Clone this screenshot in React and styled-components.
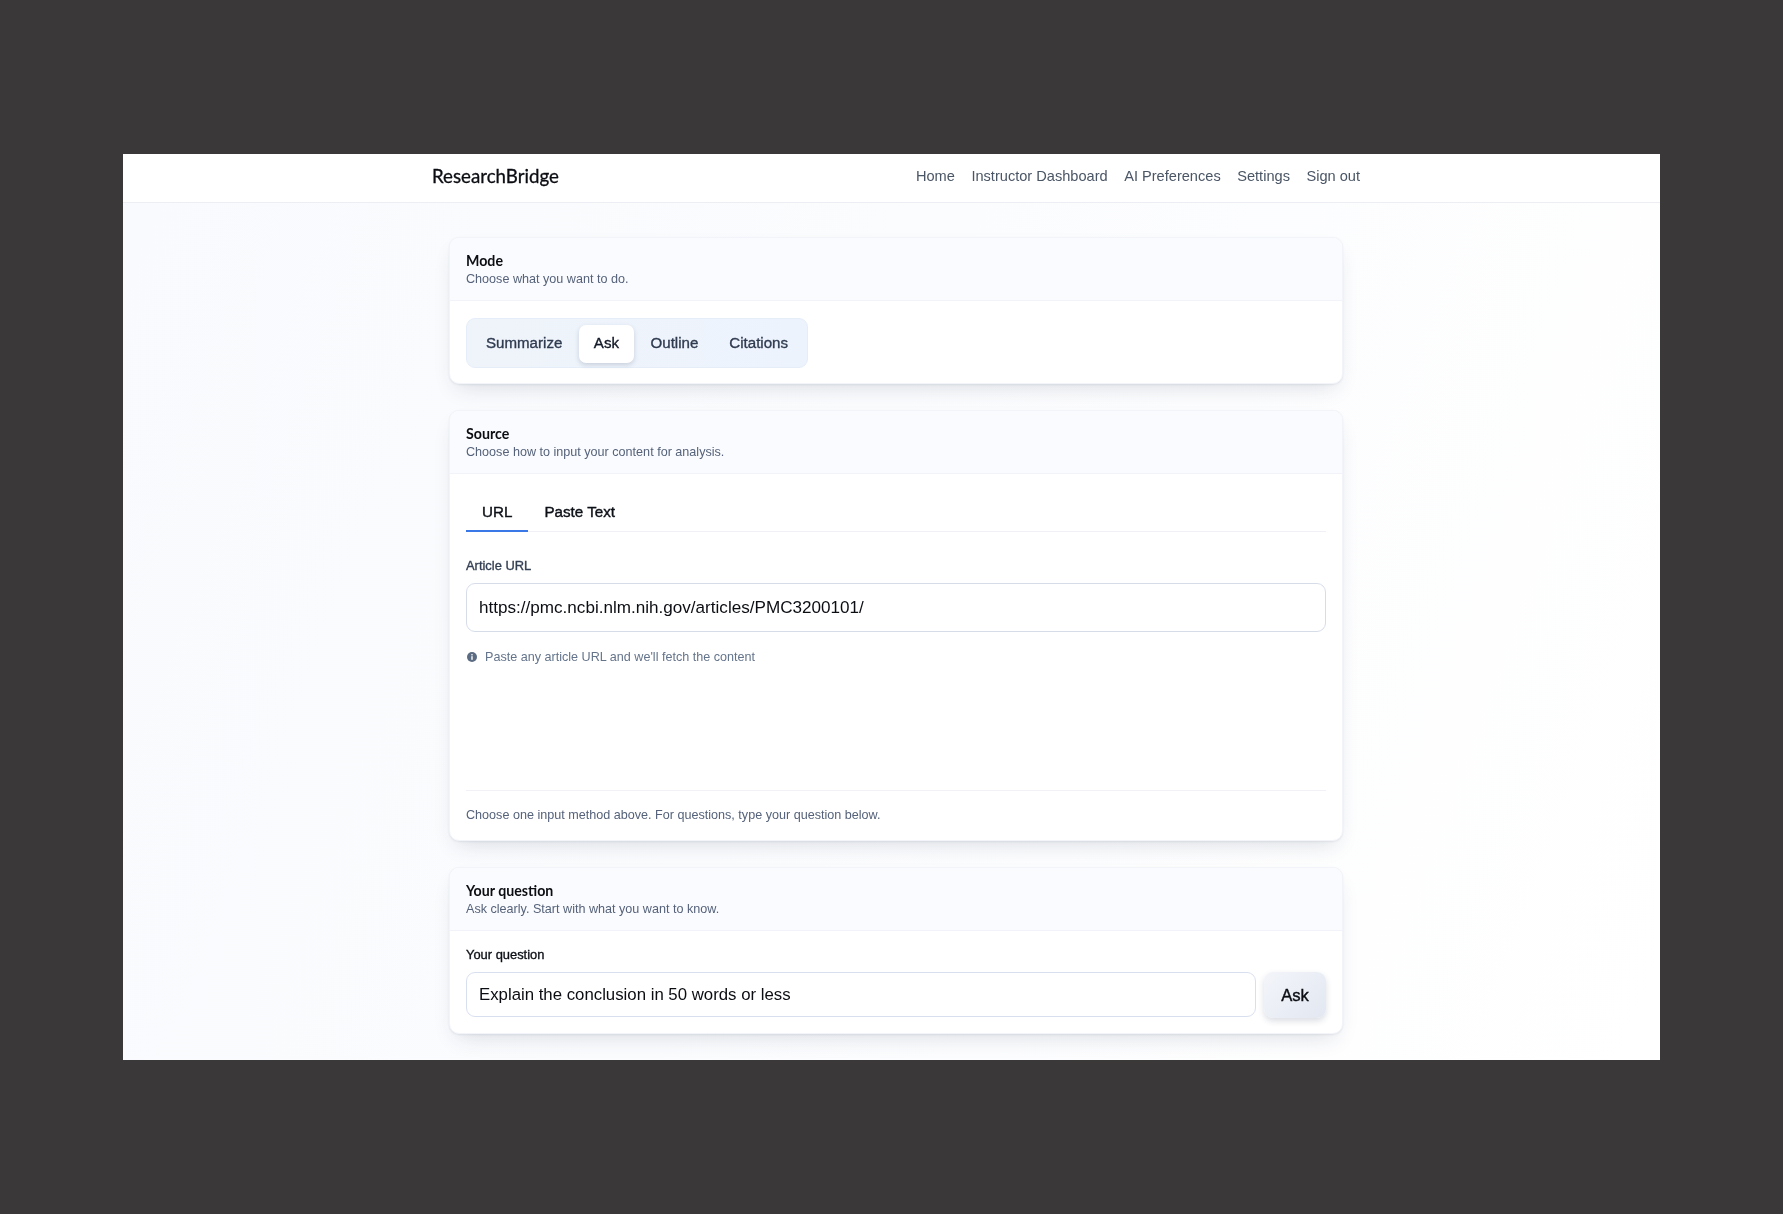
import React from "react";
import styled, { createGlobalStyle } from "styled-components";

const Global = createGlobalStyle`
  html, body { margin: 0; padding: 0; background: #3a3839; }
  * { box-sizing: border-box; }
  body { font-family: "Liberation Sans", Arial, sans-serif; -webkit-font-smoothing: antialiased; }
`;

const Stage = styled.div`
  width: 1783px;
  height: 1214px;
  padding: 154px 123px;
  background: #3a3839;
  overflow: hidden;
`;

const Win = styled.div`
  width: 1537px;
  height: 906px;
  overflow: hidden;
  background: linear-gradient(110deg, #f9fafd 0%, #fbfcfe 45%, #ffffff 100%);
  filter: blur(0.35px);
`;

const Nav = styled.header`
  height: 49px;
  padding-left: 9px;
  background: #fff;
  border-bottom: 1px solid #eceef4;
`;

const NavInner = styled.div`
  width: 928px;
  height: 48px;
  margin: 0 auto;
  padding-bottom: 4px;
  display: flex;
  align-items: center;
  justify-content: space-between;
`;

const Brand = styled.div`
  font-family: "Lato", sans-serif;
  font-size: 18.7px;
  font-weight: 400;
  color: #0b0d12;
  -webkit-text-stroke: 0.3px #0b0d12;
`;

const NavLinks = styled.nav`
  display: flex;
  gap: 16.5px;
`;

const NavLink = styled.a`
  font-size: 14.6px;
  color: #4a5565;
`;

const Content = styled.div`
  padding-left: 9px;
`;

const Main = styled.main`
  width: 894px;
  margin: 0 auto;
  padding-top: 34px;
  display: flex;
  flex-direction: column;
  gap: 26px;
`;

const Card = styled.section`
  background: #fff;
  border: 1px solid #f2f4f9;
  border-radius: 10px;
  box-shadow: 0 10px 22px -8px rgba(30, 45, 80, 0.17), 0 1px 2px rgba(30, 45, 80, 0.08);
  overflow: hidden;
`;

const CardHead = styled.div`
  height: 63px;
  padding: 13px 16px 0;
  background: #fafbfe;
  border-bottom: 1px solid #f1f3f8;
`;

const CardTitle = styled.h2`
  margin: 0;
  font-family: "Lato", sans-serif;
  font-size: 14.2px;
  line-height: 19px;
  font-weight: 700;
  color: #0b0d12;
`;

const CardSub = styled.p`
  margin: 1px 0 0;
  font-size: 12.6px;
  line-height: 17px;
  color: #55627a;
`;

const ModeBody = styled.div`
  padding: 17px 16px 15px;
`;

const Segmented = styled.div`
  display: inline-flex;
  height: 50px;
  padding: 6px 5px;
  gap: 3px;
  background: linear-gradient(90deg, #eff4fa, #edf3fd);
  border: 1px solid #e5edf9;
  border-radius: 9px;
`;

const Seg = styled.button`
  height: 38px;
  padding: 0 ${p => (p.$active ? 14.5 : 14)}px 3px;
  border: 0;
  border-radius: 7px;
  font-family: "Liberation Sans", sans-serif;
  font-size: 15.1px;
  color: ${p => (p.$active ? "#111827" : "#2f3b50")};
  background: ${p => (p.$active ? "#fff" : "transparent")};
  box-shadow: ${p => (p.$active ? "0 2px 5px rgba(30,45,80,.18)" : "none")};
  -webkit-text-stroke: 0.35px currentColor;
`;

const SourceBody = styled.div`
  padding: 15px 16px 0;
  height: 366px;
  display: flex;
  flex-direction: column;
`;

const Tabs = styled.div`
  display: flex;
  height: 43px;
  border-bottom: 1px solid #eff1f6;
`;

const Tab = styled.button`
  height: 43px;
  padding: 3px 16px 0;
  background: none;
  border: 0;
  border-bottom: 2px solid ${p => (p.$active ? "#3b78e7" : "transparent")};
  font-family: "Liberation Sans", sans-serif;
  font-size: 15.2px;
  color: #0d1117;
  -webkit-text-stroke: 0.4px #0d1117;
`;

const Label = styled.label`
  display: block;
  font-size: 12.9px;
  line-height: 16px;
  -webkit-text-stroke: 0.35px currentColor;
  color: ${p => (p.$dark ? "#0d1117" : "#333f53")};
`;

const UrlLabel = styled(Label)`
  margin-top: 26px;
`;

const UrlField = styled.div`
  margin-top: 9px;
  height: 49px;
  flex: none;
  display: flex;
  align-items: center;
  padding: 0 12px;
  background: #fff;
  border: 1.5px solid #d6dde9;
  border-radius: 9px;
  font-size: 17.1px;
  color: #0b0d12;
`;

const Hint = styled.div`
  margin-top: 17px;
  height: 16px;
  display: flex;
  align-items: center;
  gap: 8px;
  padding-left: 1px;
  font-size: 12.6px;
  color: #64748b;
`;

const Spacer = styled.div`
  flex: 1;
`;

const FootNote = styled.div`
  height: 50px;
  padding-top: 16px;
  border-top: 1px solid #f0f2f6;
  font-size: 12.6px;
  line-height: 17px;
  color: #55627a;
`;

const QuestionBody = styled.div`
  padding: 16px 16px 15px;
`;

const QuestionRow = styled.div`
  margin-top: 9px;
  display: flex;
  gap: 8px;
`;

const QuestionField = styled.div`
  flex: 1;
  height: 45px;
  display: flex;
  align-items: center;
  padding: 0 12px;
  border: 1.5px solid #d8dfef;
  border-radius: 9px;
  font-size: 16.8px;
  color: #0b0d12;
`;

const AskButton = styled.button`
  width: 62px;
  height: 46px;
  padding: 2px 0 0;
  border: 0;
  border-radius: 9px;
  background: linear-gradient(135deg, #f3f5fa, #e2e7f1);
  box-shadow: 0 3px 6px rgba(30, 45, 80, 0.16);
  font-family: "Liberation Sans", sans-serif;
  font-size: 16.6px;
  color: #0b0d12;
  -webkit-text-stroke: 0.4px #0b0d12;
`;

const InfoIcon = () => (
  <svg width="10" height="10" viewBox="0 0 10 10" aria-hidden="true">
    <circle cx="5" cy="5" r="5" fill="#5b6b82" />
    <rect x="4.3" y="4.2" width="1.4" height="3.6" fill="#fff" />
    <rect x="4.3" y="2.1" width="1.4" height="1.3" fill="#fff" />
  </svg>
);

export default function App() {
  return (
    <Stage>
      <Global />
      <Win>
        <Nav>
          <NavInner>
            <Brand>ResearchBridge</Brand>
            <NavLinks>
              <NavLink>Home</NavLink>
              <NavLink>Instructor Dashboard</NavLink>
              <NavLink>AI Preferences</NavLink>
              <NavLink>Settings</NavLink>
              <NavLink>Sign out</NavLink>
            </NavLinks>
          </NavInner>
        </Nav>
        <Content>
          <Main>
            <Card>
              <CardHead>
                <CardTitle>Mode</CardTitle>
                <CardSub>Choose what you want to do.</CardSub>
              </CardHead>
              <ModeBody>
                <Segmented>
                  <Seg>Summarize</Seg>
                  <Seg $active>Ask</Seg>
                  <Seg>Outline</Seg>
                  <Seg>Citations</Seg>
                </Segmented>
              </ModeBody>
            </Card>
            <Card>
              <CardHead>
                <CardTitle>Source</CardTitle>
                <CardSub>Choose how to input your content for analysis.</CardSub>
              </CardHead>
              <SourceBody>
                <Tabs>
                  <Tab $active>URL</Tab>
                  <Tab>Paste Text</Tab>
                </Tabs>
                <UrlLabel>Article URL</UrlLabel>
                <UrlField>https://pmc.ncbi.nlm.nih.gov/articles/PMC3200101/</UrlField>
                <Hint>
                  <InfoIcon />
                  Paste any article URL and we'll fetch the content
                </Hint>
                <Spacer />
                <FootNote>Choose one input method above. For questions, type your question below.</FootNote>
              </SourceBody>
            </Card>
            <Card>
              <CardHead>
                <CardTitle>Your question</CardTitle>
                <CardSub>Ask clearly. Start with what you want to know.</CardSub>
              </CardHead>
              <QuestionBody>
                <Label $dark>Your question</Label>
                <QuestionRow>
                  <QuestionField>Explain the conclusion in 50 words or less</QuestionField>
                  <AskButton>Ask</AskButton>
                </QuestionRow>
              </QuestionBody>
            </Card>
          </Main>
        </Content>
      </Win>
    </Stage>
  );
}
